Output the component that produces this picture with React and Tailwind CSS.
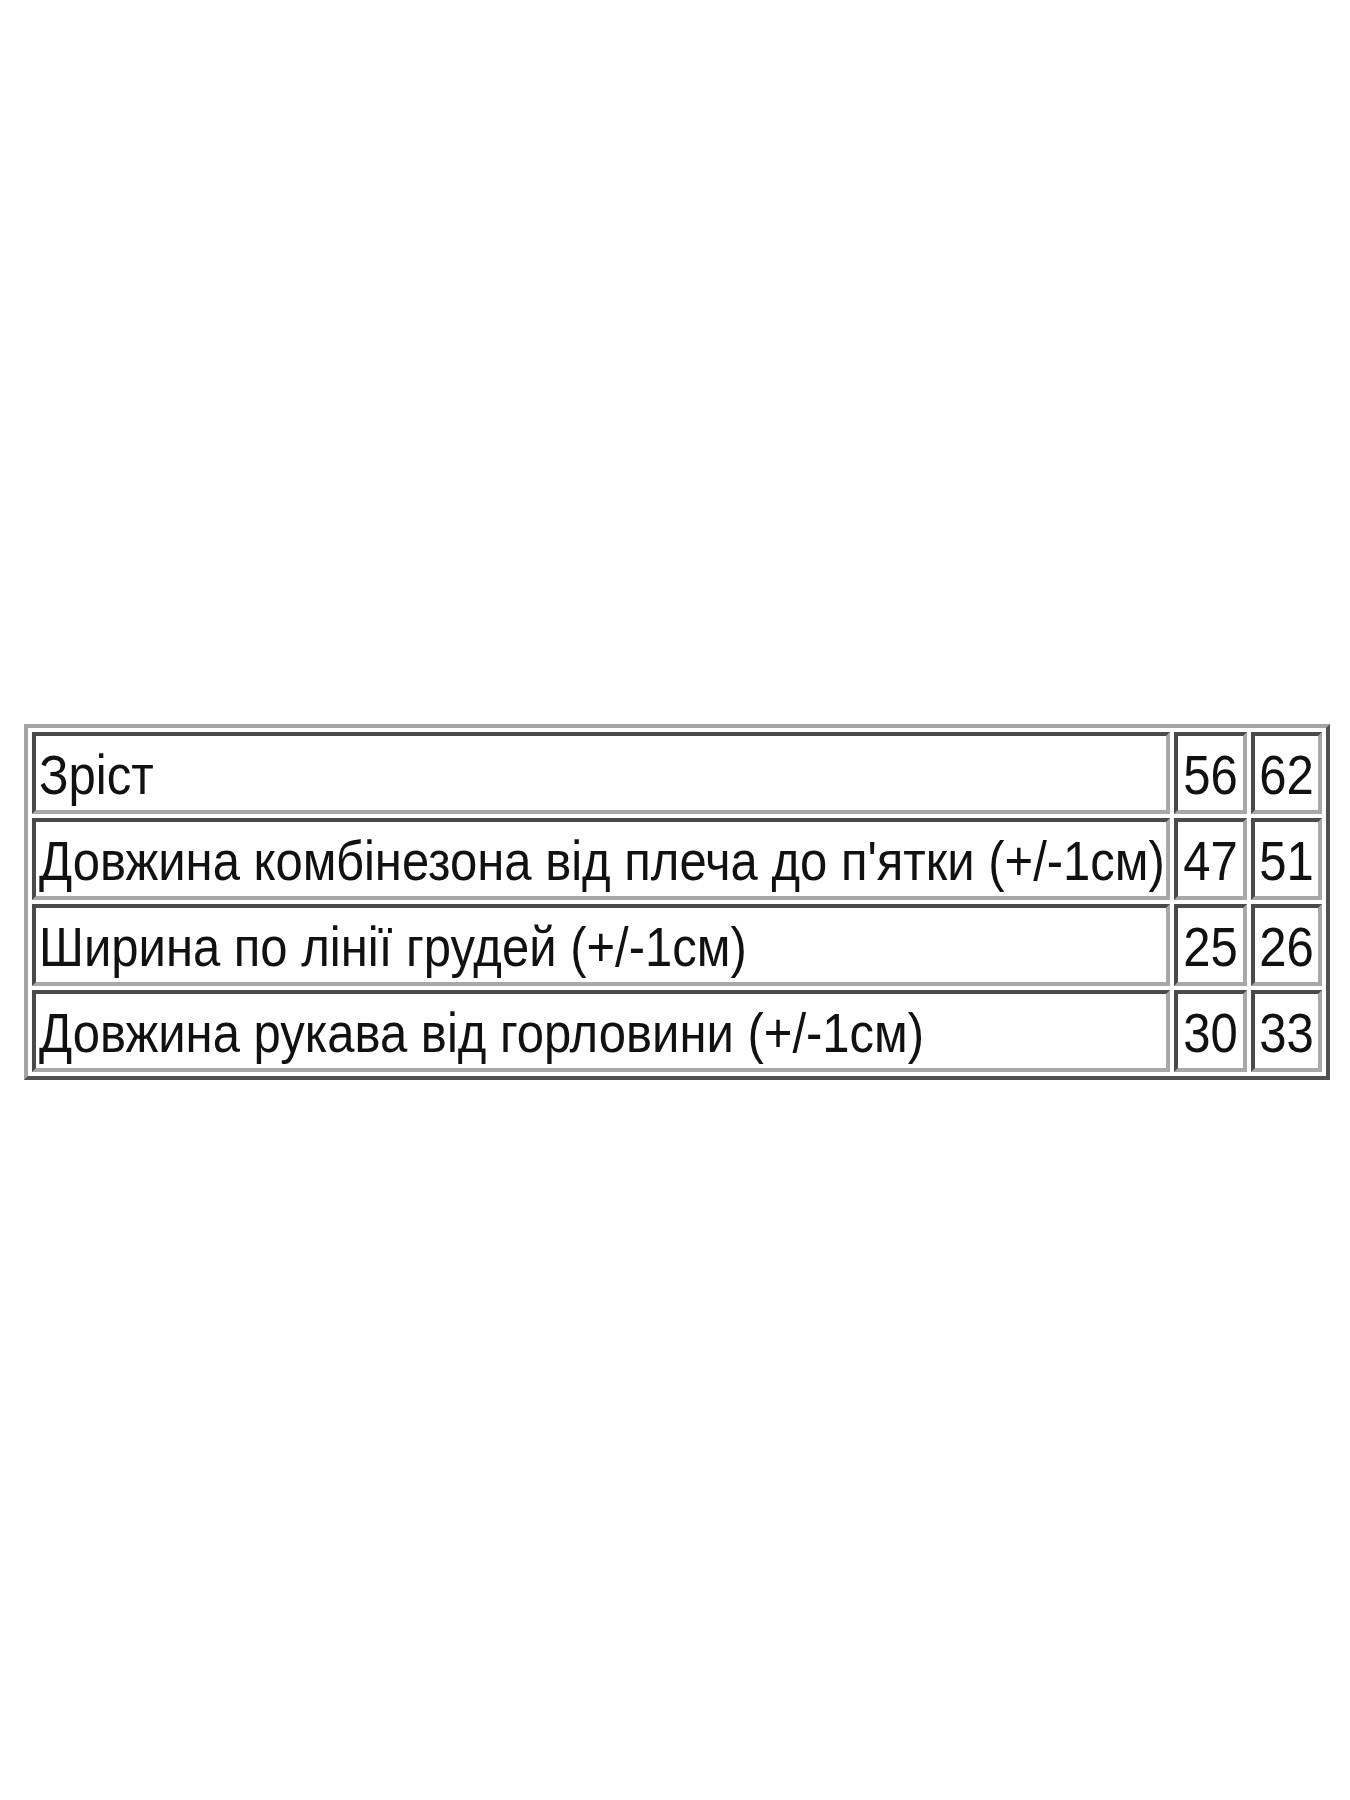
import React from "react";

const rows = [
  ["Зріст", "56", "62"],
  ["Довжина комбінезона від плеча до п'ятки (+/-1см)", "47", "51"],
  ["Ширина по лінії грудей (+/-1см)", "25", "26"],
  ["Довжина рукава від горловини (+/-1см)", "30", "33"],
];

const cell =
  "h-[82px] border-4 border-t-[#4a4a4a] border-l-[#4a4a4a] border-b-[#a8a8a8] border-r-[#a8a8a8] py-0 align-middle whitespace-nowrap";

function Txt({ children }) {
  // the source picture is stretched a little in height
  return <span className="inline-block scale-y-[1.12] translate-y-[2px]">{children}</span>;
}

export default function App() {
  return (
    <div className="min-h-[1800px] bg-white flex items-center justify-center pl-[4px] pt-[4px]">
      <table
        className="table-fixed border-separate border-spacing-[4px] border-4 border-t-[#a4a4a4] border-l-[#a4a4a4] border-b-[#505050] border-r-[#505050] w-[1306px] text-[#111] text-[49px] leading-none"
        style={{ fontFamily: '"Liberation Sans", Arial, sans-serif' }}
      >
        <colgroup>
          <col className="w-[1138px]" />
          <col className="w-[73px]" />
          <col className="w-[71px]" />
        </colgroup>
        <tbody>
          {rows.map((r) => (
            <tr key={r[0]}>
              <td className={cell + " pl-[3px] pr-0 text-left"}><Txt>{r[0]}</Txt></td>
              <td className={cell + " px-0 text-center"}><Txt>{r[1]}</Txt></td>
              <td className={cell + " px-0 text-center"}><Txt>{r[2]}</Txt></td>
            </tr>
          ))}
        </tbody>
      </table>
    </div>
  );
}
